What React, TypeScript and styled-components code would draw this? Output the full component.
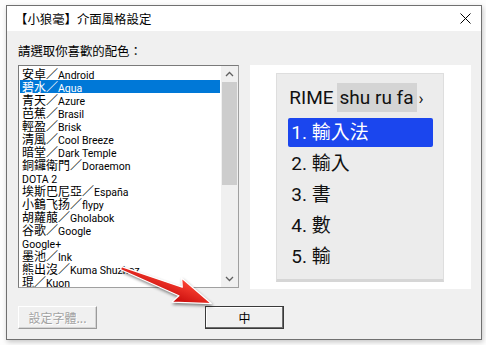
import styled, { createGlobalStyle } from "styled-components"

const GlobalStyle = createGlobalStyle`
    html, body {
        margin: 0;
        padding: 0;
        background: #fdfdfd;
        overflow: hidden;
    }
    * {
        box-sizing: border-box;
    }
`

const CJK = `"Noto Sans CJK TC", "Noto Sans CJK SC", sans-serif`
const LATIN = `Roboto, "Noto Sans", sans-serif`

const Screen = styled.div`
    position: relative;
    width: 486px;
    height: 345px;
    padding: 5px 0 0 6px;
`

const Window = styled.div`
    width: 476px;
    height: 335px;
    display: flex;
    flex-direction: column;
    background: #f0f0f0;
    border: 1px solid #707070;
    box-shadow: 1px 2px 5px rgba(0, 0, 0, 0.22);
`

const TitleBar = styled.div`
    height: 25px;
    flex-shrink: 0;
    display: flex;
    align-items: center;
    justify-content: space-between;
    background: #fff;
    padding: 0 10px 0 8px;
    font: 400 12.4px ${CJK};
    color: #000;
`

const Body = styled.div`
    flex: 1;
    display: flex;
    flex-direction: column;
    padding: 12px 10px 0 11px;
`

const Label = styled.div`
    height: 16px;
    font: 400 12.4px/16px ${CJK};
    color: #000;
`

const Main = styled.div`
    margin-top: 6px;
    display: flex;
    gap: 11px;
    height: 224px;
`

const ListBox = styled.div`
    width: 221px;
    height: 223px;
    display: flex;
    background: #fff;
    border: 1px solid #7a7a7a;
    border-right-color: #a0a0a0;
    border-bottom-color: #a0a0a0;
`

const Items = styled.div`
    flex: 1;
    overflow: hidden;
    padding: 1px 1px 0 1px;
`

const Item = styled.div<{ $selected?: boolean }>`
    height: 13px;
    line-height: 13px;
    padding-left: 2px;
    white-space: nowrap;
    color: ${(p) => (p.$selected ? "#fff" : "#000")};
    background: ${(p) => (p.$selected ? "#0078d7" : "transparent")};
`

const Zh = styled.span`
    font: 400 12px/13px ${CJK};
`

const En = styled.span`
    font: 400 10.5px/13px ${LATIN};
`

const ScrollBar = styled.div`
    width: 17px;
    display: flex;
    flex-direction: column;
    background: #f0f0f0;
`

const ScrollButton = styled.div`
    height: 16px;
    display: flex;
    align-items: center;
    justify-content: center;
`

const Track = styled.div`
    flex: 1;
    padding: 0 1px;
`

const Thumb = styled.div`
    height: 103px;
    background: #cdcdcd;
`

const Preview = styled.div`
    width: 222px;
    height: 224px;
    background: #fff;
    display: flex;
    justify-content: center;
    padding-top: 8px;
`

const CandidateBox = styled.div`
    width: 168px;
    height: 209px;
    background: #ececec;
    border: 1px solid #dedede;
    border-bottom: 3px solid #d6d6d6;
    padding: 9px 10px 0 11px;
    font: 400 19px ${LATIN};
    color: #111;
`

const Preedit = styled.div`
    height: 29px;
    display: flex;
    align-items: center;
    white-space: nowrap;
    padding-left: 1px;
`

const Highlight = styled.span`
    margin-left: 3px;
    padding: 0 3px;
    height: 29px;
    line-height: 29px;
    background: #d4d4d4;
`

const Caret = styled.span`
    margin-left: 2px;
    font-size: 17px;
`

const Candidates = styled.div`
    margin-top: 6px;
    display: flex;
    flex-direction: column;
    gap: 2px;
`

const Candidate = styled.div<{ $active?: boolean }>`
    height: 29px;
    line-height: 29px;
    padding-left: 3px;
    border-radius: 2px;
    white-space: nowrap;
    font-family: Roboto, "Noto Sans CJK TC", sans-serif;
    color: ${(p) => (p.$active ? "#fff" : "#111")};
    background: ${(p) => (p.$active ? "#1b46ee" : "transparent")};
`

const Buttons = styled.div`
    margin-top: 17px;
    display: flex;
    gap: 108px;
`

const Button = styled.div<{ $disabled?: boolean; $default?: boolean }>`
    width: 79px;
    height: 23px;
    display: flex;
    align-items: center;
    justify-content: center;
    font: 400 12px ${CJK};
    background: #f0f0f0;
    color: ${(p) => (p.$disabled ? "#a2a2a2" : "#000")};
    text-shadow: ${(p) => (p.$disabled ? "1px 1px 0 #fff" : "none")};
    border: 1px solid;
    border-color: ${(p) =>
        p.$default ? "#3a3a3a" : "#ffffff #9a9a9a #9a9a9a #ffffff"};
    box-shadow: ${(p) =>
        p.$default
            ? "inset -1px -1px 0 #6e6e6e, inset 1px 1px 0 #fff"
            : "inset -1px -1px 0 #d4d4d4"};
`

const ArrowLayer = styled.svg`
    position: absolute;
    left: 0;
    top: 0;
    pointer-events: none;
    filter: drop-shadow(1px 2px 1.5px rgba(0, 0, 0, 0.45));
`

const schemes: [string, string][] = [
    ["安卓／", "Android"],
    ["碧水／", "Aqua"],
    ["青天／", "Azure"],
    ["芭蕉／", "Brasil"],
    ["輕盈／", "Brisk"],
    ["清風／", "Cool Breeze"],
    ["暗堂／", "Dark Temple"],
    ["銅鑼衛門／", "Doraemon"],
    ["", "DOTA 2"],
    ["埃斯巴尼亞／", "España"],
    ["小鶴飞扬／", "flypy"],
    ["胡蘿菔／", "Gholabok"],
    ["谷歌／", "Google"],
    ["", "Google+"],
    ["墨池／", "Ink"],
    ["熊出沒／", "Kuma Shuzhoz"],
    ["琨／", "Kuon"],
]

const candidates = ["輸入法", "輸入", "書", "數", "輸"]

function Chevron({ up }: { up?: boolean }) {
    return (
        <svg width="9" height="6" viewBox="0 0 9 6">
            <path
                d={up ? "M1 5 L4.5 1.5 L8 5" : "M1 1 L4.5 4.5 L8 1"}
                fill="none"
                stroke="#606060"
                strokeWidth="1.3"
            />
        </svg>
    )
}

export default function App() {
    return (
        <Screen>
            <GlobalStyle />
            <Window>
                <TitleBar>
                    <span>【小狼毫】介面風格設定</span>
                    <svg width="11" height="11" viewBox="0 0 11 11">
                        <path d="M0.5 0.5 L10.5 10.5 M10.5 0.5 L0.5 10.5" stroke="#000" strokeWidth="1" />
                    </svg>
                </TitleBar>
                <Body>
                    <Label>請選取你喜歡的配色：</Label>
                    <Main>
                        <ListBox>
                            <Items>
                                {schemes.map(([zh, en], i) => (
                                    <Item key={en} $selected={i === 1}>
                                        {zh && <Zh>{zh}</Zh>}
                                        <En>{en}</En>
                                    </Item>
                                ))}
                            </Items>
                            <ScrollBar>
                                <ScrollButton>
                                    <Chevron up />
                                </ScrollButton>
                                <Track>
                                    <Thumb />
                                </Track>
                                <ScrollButton>
                                    <Chevron />
                                </ScrollButton>
                            </ScrollBar>
                        </ListBox>
                        <Preview>
                            <CandidateBox>
                                <Preedit>
                                    RIME<Highlight>shu ru fa</Highlight>
                                    <Caret>›</Caret>
                                </Preedit>
                                <Candidates>
                                    {candidates.map((c, i) => (
                                        <Candidate key={c} $active={i === 0}>
                                            {i + 1}. {c}
                                        </Candidate>
                                    ))}
                                </Candidates>
                            </CandidateBox>
                        </Preview>
                    </Main>
                    <Buttons>
                        <Button $disabled>設定字體...</Button>
                        <Button $default>中</Button>
                    </Buttons>
                </Body>
            </Window>
            <ArrowLayer width="486" height="345" viewBox="0 0 486 345">
                <defs>
                    <linearGradient id="arrowFill" x1="0" y1="0" x2="0" y2="1">
                        <stop offset="0" stopColor="#ff4636" />
                        <stop offset="1" stopColor="#c40808" />
                    </linearGradient>
                </defs>
                <g transform="translate(121 268) rotate(21.5)">
                    <polygon
                        points="0,-1.6 64,-4.6 60,-13 97,0 60,13 64,4.6 0,1.6"
                        fill="url(#arrowFill)"
                        stroke="#fff"
                        strokeWidth="1.3"
                        strokeLinejoin="round"
                    />
                </g>
            </ArrowLayer>
        </Screen>
    )
}
